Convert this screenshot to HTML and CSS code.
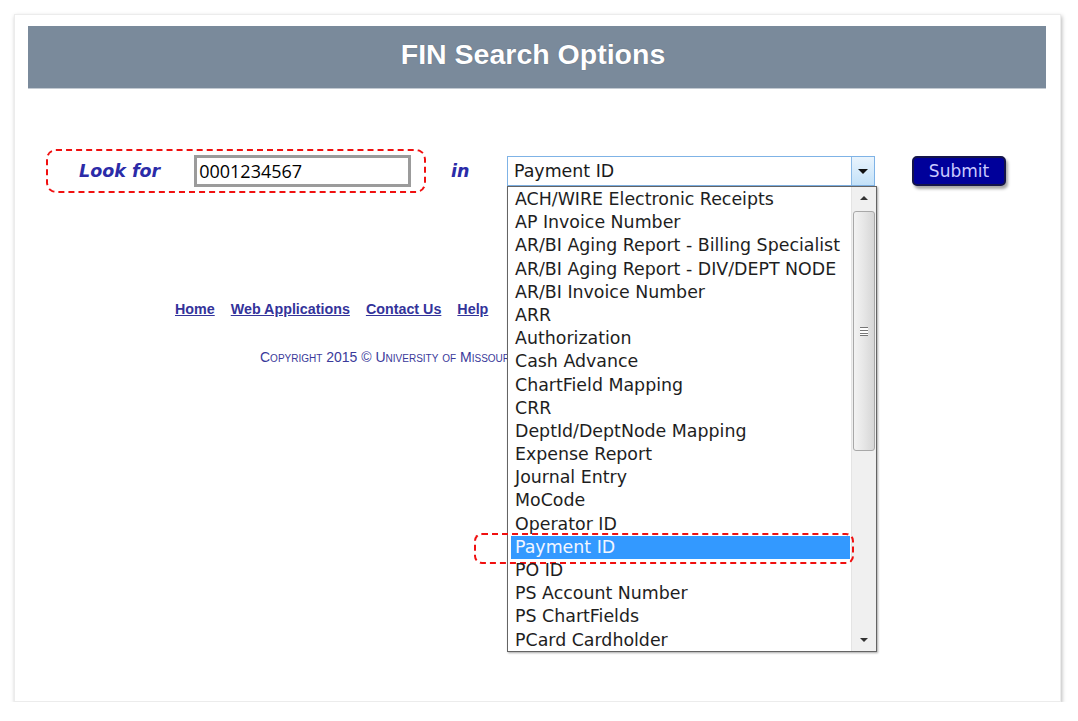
FILE: index.html
```html
<!DOCTYPE html>
<html>
<head>
<meta charset="utf-8">
<title>FIN Search Options</title>
<link rel="stylesheet" href="styles.css">
</head>
<body>
<div class="card">
  <div class="header"><h1>FIN Search Options</h1></div>
  <div class="search-row">
    <div class="lookfor-box">
      <span class="label">Look for</span>
      <div class="text-input">0001234567</div>
    </div>
    <span class="label in-label">in</span>
    <div class="select-wrap">
      <div class="select">
        <span class="select-value">Payment ID</span>
        <span class="select-btn"><span class="tri-down"></span></span>
      </div>
      <div class="dropdown">
        <ul class="options">
          <li>ACH/WIRE Electronic Receipts</li>
          <li>AP Invoice Number</li>
          <li>AR/BI Aging Report - Billing Specialist</li>
          <li>AR/BI Aging Report - DIV/DEPT NODE</li>
          <li>AR/BI Invoice Number</li>
          <li>ARR</li>
          <li>Authorization</li>
          <li>Cash Advance</li>
          <li>ChartField Mapping</li>
          <li>CRR</li>
          <li>DeptId/DeptNode Mapping</li>
          <li>Expense Report</li>
          <li>Journal Entry</li>
          <li>MoCode</li>
          <li>Operator ID</li>
          <li class="selected">Payment ID<span class="mark"></span></li>
          <li>PO ID</li>
          <li>PS Account Number</li>
          <li>PS ChartFields</li>
          <li>PCard Cardholder</li>
        </ul>
        <div class="scrollbar">
          <div class="sb-arrow"><span class="tri-up-small"></span></div>
          <div class="sb-track">
            <div class="sb-thumb"><span class="grip"></span></div>
          </div>
          <div class="sb-arrow"><span class="tri-down-small"></span></div>
        </div>
      </div>
    </div>
    <div class="submit">Submit</div>
  </div>
  <div class="footer-links">
    <a href="#">Home</a>
    <a href="#">Web Applications</a>
    <a href="#">Contact Us</a>
    <a href="#">Help</a>
  </div>
  <div class="copyright">Copyright 2015 © University of Missouri</div>
</div>
</body>
</html>
```
FILE: styles.css
```css
html, body {
  margin: 0;
  padding: 0;
  background: #ffffff;
}
body {
  font-family: "Liberation Sans", Arial, sans-serif;
}
.card {
  margin: 14px 0 0 14px;
  width: 1047px;
  height: 688px;
  box-sizing: border-box;
  padding: 11px 14px 0 13px;
  background: #fff;
  border: 1px solid #ececec;
  box-shadow: 1px 2px 4px rgba(0,0,0,0.28);
}
.header {
  height: 63px;
  background: #7a8a9b;
  display: flex;
  align-items: center;
  justify-content: center;
  border-bottom: 1px solid #c3cad2;
  box-sizing: border-box;
  padding-right: 8px;
}
.header h1 {
  margin: 0 0 6px 0;
  color: #fff;
  font: bold 28.5px "Liberation Sans", Arial, sans-serif;
  text-shadow: 0 0 1px rgba(60,70,90,0.6);
}
.search-row {
  margin-top: 60px;
  padding-left: 18px;
  display: flex;
  align-items: center;
  height: 44px;
}
.lookfor-box {
  width: 380px;
  height: 44px;
  box-sizing: border-box;
  border: 2px dashed #f01010;
  border-radius: 10px;
  display: flex;
  align-items: center;
  padding-left: 31px;
}
.label {
  font: bold oblique 17.5px "DejaVu Sans", Verdana, sans-serif;
  color: #2b2ba8;
}
.text-input {
  margin-left: 34px;
  width: 217px;
  height: 32px;
  box-sizing: border-box;
  border: 3px solid #9b9b9b;
  font: 18px "Open Sans", Calibri, sans-serif;
  line-height: 26px;
  padding-left: 2px;
  color: #000;
}
.in-label {
  margin-left: 25px;
  width: 56px;
}
.select-wrap {
  position: relative;
  width: 368px;
  height: 30px;
}
.select {
  height: 30px;
  box-sizing: border-box;
  border: 1px solid #7fb3e6;
  display: flex;
  align-items: center;
  font: 17.4px "DejaVu Sans", Tahoma, sans-serif;
  color: #1a1a1a;
  background: #fff;
}
.select-value {
  flex: 1;
  padding-left: 6px;
}
.select-btn {
  width: 22px;
  height: 100%;
  border-left: 1px solid #8ab9e6;
  background: linear-gradient(#e9f4fd, #c3e1f8);
  display: flex;
  align-items: center;
  justify-content: center;
}
.tri-down {
  width: 0;
  height: 0;
  border-left: 5px solid transparent;
  border-right: 5px solid transparent;
  border-top: 5px solid #111;
}
.dropdown {
  position: absolute;
  left: 0;
  top: 30px;
  width: 370px;
  height: 466px;
  box-sizing: border-box;
  border: 1px solid #646464;
  background: #fff;
  box-shadow: 1px 1px 2px rgba(0,0,0,0.35);
  display: flex;
  z-index: 5;
}
.options {
  list-style: none;
  margin: 0;
  padding: 1px 1px 0 3px;
  flex: 1;
  font: 17.4px "DejaVu Sans", Tahoma, sans-serif;
  color: #1e1e1e;
}
.options li {
  height: 23.2px;
  line-height: 23.2px;
  padding-left: 4px;
  white-space: nowrap;
  position: relative;
}
.options li.selected {
  background: #3399ff;
  color: #f2f6ff;
}
.mark {
  position: absolute;
  left: -37px;
  top: -3px;
  right: -4px;
  bottom: -5px;
  border: 2px dashed #f01010;
  border-radius: 8px;
}
.scrollbar {
  width: 24px;
  background: #f0f0f0;
  border-left: 1px solid #e4e4e4;
  display: flex;
  flex-direction: column;
}
.sb-arrow {
  height: 22px;
  display: flex;
  align-items: center;
  justify-content: center;
}
.tri-up-small {
  width: 0; height: 0;
  border-left: 4px solid transparent;
  border-right: 4px solid transparent;
  border-bottom: 4px solid #333;
}
.tri-down-small {
  width: 0; height: 0;
  border-left: 4px solid transparent;
  border-right: 4px solid transparent;
  border-top: 4px solid #333;
}
.sb-track {
  flex: 1;
}
.sb-thumb {
  margin: 2px 1px 0 1px;
  height: 240px;
  box-sizing: border-box;
  border: 1px solid #a8a8a8;
  border-radius: 3px;
  background: linear-gradient(to right, #f3f3f3, #e6e6e6 50%, #d6d6d6);
  display: flex;
  align-items: center;
  justify-content: center;
}
.grip {
  width: 8px;
  height: 7px;
  border-top: 1px solid #777;
  border-bottom: 1px solid #777;
  background: linear-gradient(#fff 0 2px, #777 2px 3px, #fff 3px 5px, #777 5px 6px, #fff 6px);
}
.submit {
  margin-left: 37px;
  width: 94px;
  height: 30px;
  box-sizing: border-box;
  background: #00009a;
  border: 2px solid #14144a;
  border-radius: 5px;
  box-shadow: 2px 3px 3px rgba(0,0,0,0.35);
  color: #c9c9ff;
  font: 17px "DejaVu Sans", Tahoma, sans-serif;
  display: flex;
  align-items: center;
  justify-content: center;
}
.footer-links {
  margin-top: 108px;
  padding-left: 147px;
  display: flex;
  gap: 16px;
  font: bold 14.3px "Liberation Sans", Arial, sans-serif;
}
.footer-links a {
  color: #33339a;
  text-decoration: underline;
}
.copyright {
  margin-top: 32px;
  padding-left: 232px;
  font: 14px "Liberation Sans", Arial, sans-serif;
  font-variant: small-caps;
  color: #3a3a9a;
}
```
